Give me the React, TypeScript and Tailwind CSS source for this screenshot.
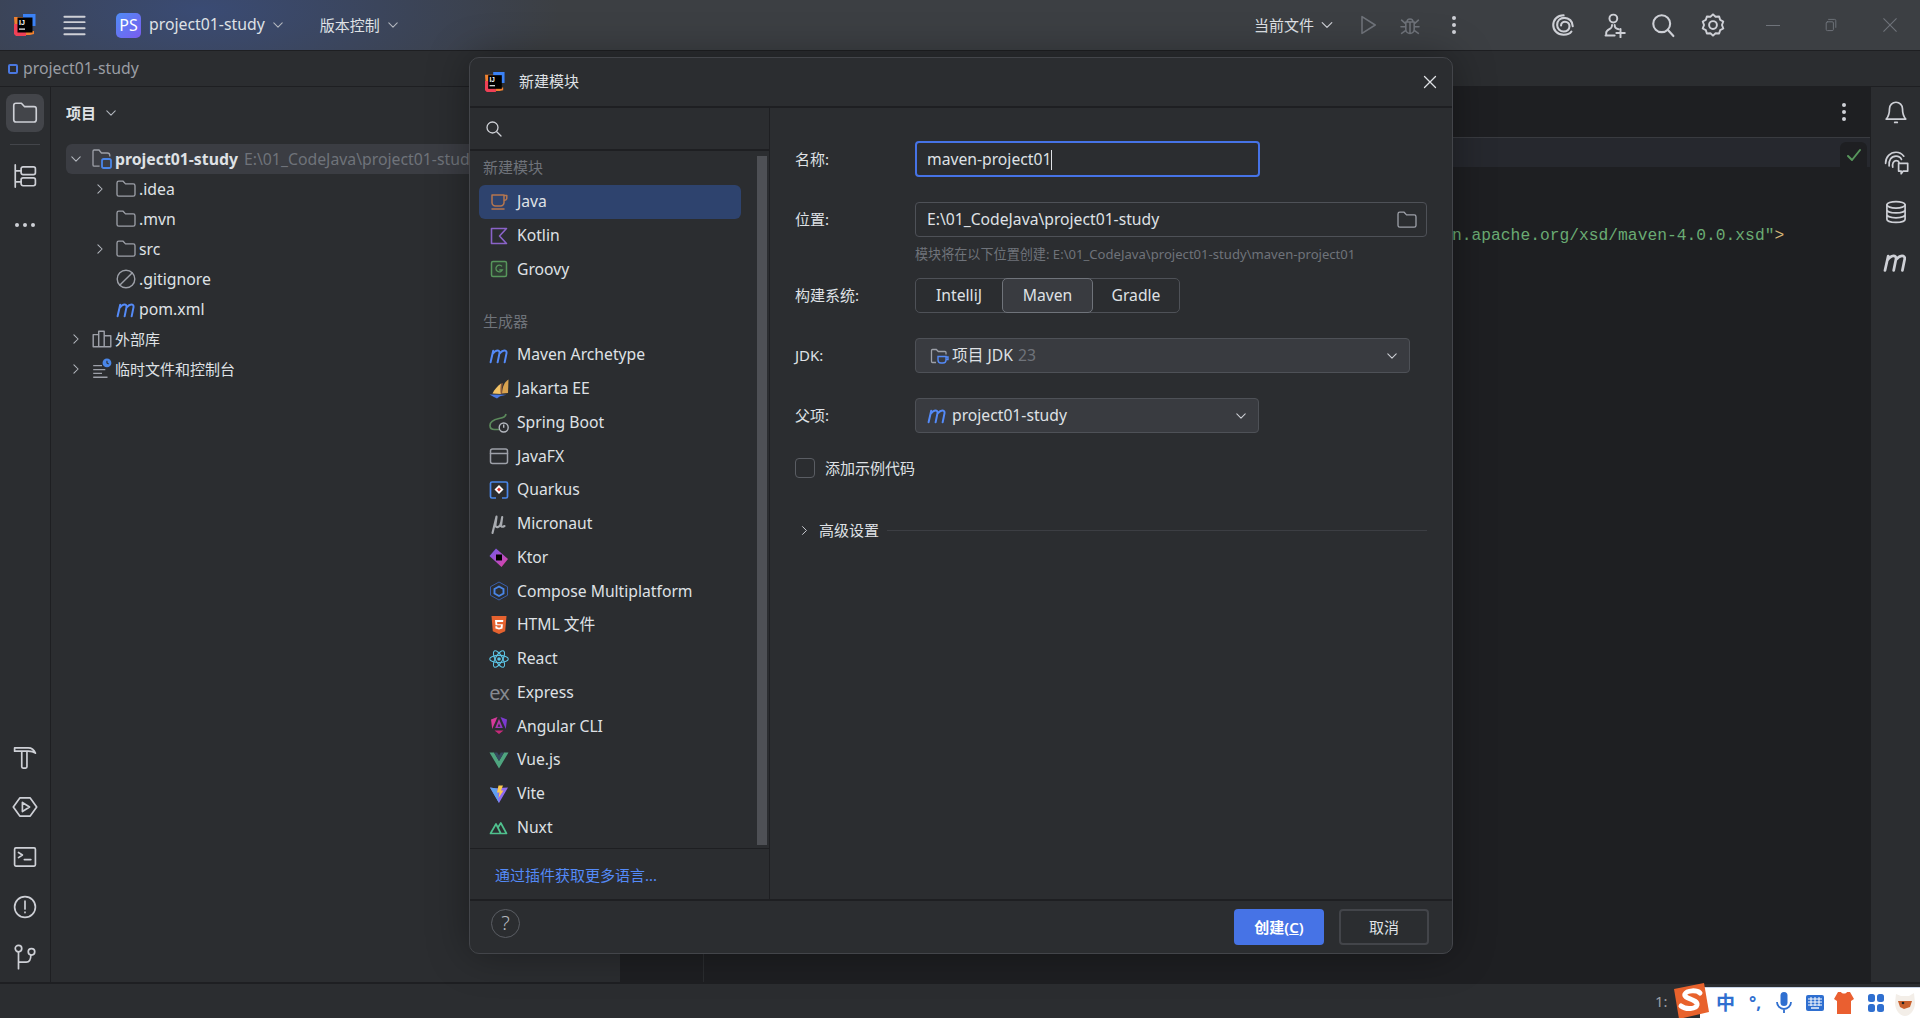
import { ReactNode } from "react";

const stroke = "#ced0d6";

function Ico({ s = 20, children, c = stroke, w = 1.3 }: { s?: number; children: ReactNode; c?: string; w?: number }) {
  return (
    <svg width={s} height={s} viewBox="0 0 20 20" fill="none" stroke={c} strokeWidth={w} strokeLinecap="round" strokeLinejoin="round" className="shrink-0">
      {children}
    </svg>
  );
}

function Chevron({ dir = "down", c = "#b4b8bf", s = 14 }: { dir?: "down" | "right"; c?: string; s?: number }) {
  return (
    <Ico s={s} c={c} w={1.5}>
      {dir === "down" ? <path d="M4 7l6 6 6-6" /> : <path d="M7 4l6 6-6 6" />}
    </Ico>
  );
}

const FolderPath = "M2.5 5a1.5 1.5 0 0 1 1.5-1.5h3.6l2 2.2H16a1.5 1.5 0 0 1 1.5 1.5v7.3a1.5 1.5 0 0 1-1.5 1.5H4a1.5 1.5 0 0 1-1.5-1.5z";

function Folder({ s = 24, c = "#9da0a8" }: { s?: number; c?: string }) {
  return (
    <Ico s={s} c={c} w={1.1}>
      <path d={FolderPath} />
    </Ico>
  );
}

function MavenM({ s = 21, c = "#548af7", w = 1.9 }: { s?: number; c?: string; w?: number }) {
  return (
    <Ico s={s} c={c} w={w}>
      <path d="M1.500 16.500L4 5.500M3.400 8.500C5 6.400 6.600 5.200 8 5.200s2.300 1 2 2.500L8.200 16.500M10.200 8C11.700 6.200 13.300 5.200 14.600 5.200s2.400 1 2.100 2.500L14.900 16.500" />
    </Ico>
  );
}

function IdeaLogo({ s = 22 }: { s?: number }) {
  return (
    <svg width={s} height={s} viewBox="0 0 22 22" className="shrink-0">
      <path d="M0 3h12v4H4v9l-3 2z" fill="#f0812f" />
      <path d="M9 0h12.500v12H17V4H9z" fill="#3b82f6" />
      <path d="M0 10h4v8h8v4H2l-2-2z" fill="#ef4056" />
      <path d="M12 17h8v3l-4 1h-4z" fill="#f0812f" />
      <rect x="3.500" y="3.500" width="15" height="15" fill="#000" />
      <text x="5" y="10.500" fontSize="7" fontWeight="700" fill="#fff" fontFamily="Liberation Sans">IJ</text>
      <rect x="5" y="14.500" width="6" height="1.200" fill="#fff" />
    </svg>
  );
}

const LANG_ICONS: Record<string, ReactNode> = {
  Java: (
    <Ico c="#b5764f" w={1.5}>
      <path d="M3 3h12v7.500a3.500 3.500 0 0 1-3.500 3.500h-5A3.500 3.500 0 0 1 3 10.500zM15 3.600h2.800v2.600a2 2 0 0 1-2.800 1.800M3 17h12" />
    </Ico>
  ),
  Kotlin: (
    <Ico c="#8a63c8" w={1.6}>
      <path d="M2.500 2.500h15l-7 7.500 7 7.500h-15z" />
    </Ico>
  ),
  Groovy: (
    <svg width="20" height="20" viewBox="0 0 20 20" fill="none" className="shrink-0">
      <rect x="2.500" y="2.500" width="15" height="15" rx="1.500" stroke="#57965c" strokeWidth="1.500" fill="#2f3d33" />
      <path d="M13 7.400A3.400 3.400 0 1 0 13.400 11H10.300" stroke="#57965c" strokeWidth="1.300" />
    </svg>
  ),
  "Maven Archetype": <MavenM />,
  "Jakarta EE": (
    <svg width="20" height="20" viewBox="0 0 20 20" className="shrink-0">
      <path d="M19.500 0.500C15.500 3 13.500 7 13 14.500l6-.5z" fill="#d9a24f" />
      <path d="M12 4.500C8.500 7 5.500 10.500 3.500 14.500l8.500.5z" fill="#f2c265" />
      <path d="M12 4.500c-.6 3-.8 6.500-.3 10.500l1.300-.3c-.2-4 .2-7.500 1-10.500z" fill="#8d5a3a" />
      <path d="M0.500 15.500l17 .2-6.500 1.500-3 2.300-3.500-1.800z" fill="#4a78e0" />
    </svg>
  ),
  "Spring Boot": (
    <svg width="20" height="20" viewBox="0 0 20 20" fill="none" className="shrink-0">
      <path d="M17 1c-.5 3-2.500 3.500-7 4.500C5 6.500 1 8.500 1 12.500 1 15 3 16.500 5.500 16.500H10" stroke="#5c8a5c" strokeWidth="1.700" />
      <circle cx="14.700" cy="14.500" r="4.500" stroke="#b4b8bf" strokeWidth="1.400" />
      <path d="M14.700 11.500v3.200" stroke="#b4b8bf" strokeWidth="1.400" />
    </svg>
  ),
  JavaFX: (
    <Ico c="#9da0a8" w={1.5}>
      <rect x="1.500" y="3" width="17" height="14.500" rx="2" />
      <path d="M1.500 7.500h17" />
    </Ico>
  ),
  Quarkus: (
    <svg width="20" height="20" viewBox="0 0 20 20" fill="none" className="shrink-0">
      <path d="M7 18H3a1.500 1.500 0 0 1-1.500-1.500v-13A1.500 1.500 0 0 1 3 2h14a1.500 1.500 0 0 1 1.500 1.500v13A1.500 1.500 0 0 1 17 18h-4" stroke="#4a86e8" strokeWidth="1.700" />
      <path d="M10 5l4.500 4.500-4.500 4.500-4.500-4.500z" fill="#fff" />
      <path d="M10 7.500l2 2-2 2-2-2z" fill="#d0342c" />
    </svg>
  ),
  Micronaut: (
    <Ico c="#a8abb0" w={2.100}>
      <path d="M7.500 2.500L3.500 19M7.500 3l-1 7.500c-.3 2 1 3 2.500 2.500 1.800-.6 2.800-2.200 3.300-5l.9-5M13.200 3l-1.100 8c-.2 1.800 1 2.300 3.400 1" />
    </Ico>
  ),
  Ktor: (
    <svg width="20" height="20" viewBox="0 0 20 20" className="shrink-0">
      <defs>
        <linearGradient id="ktorG" x1="0" y1="0" x2="1" y2="1">
          <stop offset="0" stopColor="#6d5cf0" />
          <stop offset="1" stopColor="#e83fa0" />
        </linearGradient>
      </defs>
      <path d="M7 0.500L19 11l-6.500 8L0.500 8z" fill="url(#ktorG)" />
      <rect x="7" y="6.500" width="6" height="6" fill="#000" />
    </svg>
  ),
  "Compose Multiplatform": (
    <svg width="20" height="20" viewBox="0 0 20 20" fill="none" className="shrink-0">
      <path d="M10 1l8.500 4.700v8.600L10 19l-8.500-4.700V5.700z" stroke="#3a5ea8" strokeWidth="1" />
      <path d="M10 5.500l4.500 2.500v4.500L10 15l-4.500-2.500V8z" stroke="#4a86e8" strokeWidth="1.900" />
    </svg>
  ),
  "HTML 文件": (
    <svg width="20" height="20" viewBox="0 0 20 20" className="shrink-0">
      <path d="M2.500 1h15l-1.300 15.300L10 19l-6.200-2.700z" fill="#e5622f" />
      <path d="M6 5h8.300l-.2 2H8.100l.2 2.200h5.600l-.4 4.300-3.500 1.100-3.500-1.100-.2-2.300h1.900l.1 1 1.700.5 1.700-.5.200-2H6.500z" fill="#fff" />
    </svg>
  ),
  React: (
    <svg width="20" height="20" viewBox="0 0 20 20" fill="none" stroke="#5cc4e4" strokeWidth="1.100" className="shrink-0">
      <ellipse cx="10" cy="10" rx="9.300" ry="3.600" />
      <ellipse cx="10" cy="10" rx="9.300" ry="3.600" transform="rotate(60 10 10)" />
      <ellipse cx="10" cy="10" rx="9.300" ry="3.600" transform="rotate(120 10 10)" />
      <circle cx="10" cy="10" r="1.800" fill="#5cc4e4" stroke="none" />
    </svg>
  ),
  Express: <span className="text-[20px] leading-none text-[#868a91] tracking-[-1px]">ex</span>,
  "Angular CLI": (
    <svg width="20" height="20" viewBox="0 0 20 20" className="shrink-0">
      <defs>
        <linearGradient id="angG" x1="0" y1="0" x2="1" y2="1">
          <stop offset="0" stopColor="#e0338f" />
          <stop offset="1" stopColor="#7c3ad0" />
        </linearGradient>
      </defs>
      <path d="M8.500 1L2 3.500 3.200 13z" fill="#d63a9a" />
      <path d="M11.500 1L18 3.500 16.800 13z" fill="#7c3ad0" />
      <path d="M10 3l3.800 9H6.200z" fill="url(#angG)" />
      <path d="M5.500 14.500h9L10 18z" fill="#c62a7a" />
      <path d="M10 7.500l1.400 3.300H8.600z" fill="#2b2d30" />
    </svg>
  ),
  "Vue.js": (
    <svg width="20" height="20" viewBox="0 0 20 20" className="shrink-0">
      <path d="M0.500 2.500H5L10 11 15 2.500h4.500L10 18.500z" fill="#4fa57f" />
      <path d="M5 2.500h3.200L10 5.500l1.800-3H15L10 11z" fill="#35495e" />
    </svg>
  ),
  Vite: (
    <svg width="20" height="20" viewBox="0 0 20 20" className="shrink-0">
      <path d="M1 3.500l6 .9 3-.5 9-.4L10 19z" fill="#8f6cf0" />
      <path d="M1 3.500l7 1L10 19z" fill="#5fa0ee" />
      <path d="M9.500 1.500h4.500l-2 5h2.500L9.500 14l1-5.500H8z" fill="#fbc94b" />
    </svg>
  ),
  Nuxt: (
    <Ico c="#4fc08d" w={1.700}>
      <path d="M1.500 15.500L7 6l4.800 9.500zM9 9.500L11.800 5l5.700 10.500h-5.700" />
    </Ico>
  ),
};

function LangRow({ name, active }: { name: string; active?: boolean }) {
  return (
    <div className={`flex items-center h-[33.75px] w-[262px] pl-[10px] gap-[8px] rounded-md ${active ? "bg-[#2e436e]" : ""}`}>
      <div className="flex w-[20px] justify-center">{LANG_ICONS[name]}</div>
      <span className="text-[15.700px] text-[#dfe1e5] whitespace-nowrap">{name}</span>
    </div>
  );
}

function TreeRow({ indent, arrow, icon, children, selected }: { indent: number; arrow?: "down" | "right"; icon: ReactNode; children: ReactNode; selected?: boolean }) {
  return (
    <div className={`flex items-center h-[30px] whitespace-nowrap rounded-l-md ${selected ? "bg-[#3b3d43]" : ""}`} style={{ paddingLeft: indent }}>
      <div className="w-[20px] flex justify-center">{arrow && <Chevron dir={arrow} />}</div>
      <div className="w-[24px] ml-[4px] flex justify-center">{icon}</div>
      <div className="ml-[1px] pt-[2px] text-[15.800px] text-[#dfe1e5]">{children}</div>
    </div>
  );
}

function FormRow({ label, className, children }: { label: string; className: string; children: ReactNode }) {
  return (
    <div className={`flex items-center ${className}`}>
      <div className="w-[120px] text-[15px] text-[#dfe1e5]">{label}</div>
      {children}
    </div>
  );
}

const generators = ["Maven Archetype", "Jakarta EE", "Spring Boot", "JavaFX", "Quarkus", "Micronaut", "Ktor", "Compose Multiplatform", "HTML 文件", "React", "Express", "Angular CLI", "Vue.js", "Vite", "Nuxt"];

function Kebab() {
  return (
    <div className="flex flex-col gap-[3px]">
      <span className="w-[4px] h-[4px] rounded-full bg-[#ced0d6]" />
      <span className="w-[4px] h-[4px] rounded-full bg-[#ced0d6]" />
      <span className="w-[4px] h-[4px] rounded-full bg-[#ced0d6]" />
    </div>
  );
}

function NewModuleDialog() {
  return (
    <div className="absolute left-[469px] top-[57px] w-[984px] h-[897px] flex flex-col bg-[#2b2d30] border border-[#43454a] rounded-[10px] shadow-[0_0_40px_rgba(0,0,0,0.35)] overflow-hidden">
      {/* title */}
      <div className="flex items-center h-[50px] shrink-0 pl-[15px] pr-[12px] border-b-2 border-[#1e1f22]">
        <IdeaLogo s={20} />
        <span className="ml-[14px] -mt-[2px] text-[15px] text-[#dfe1e5]">新建模块</span>
        <div className="ml-auto">
          <Ico s={20} c="#dfe1e5" w={1.3}>
            <path d="M4.500 4.500l11 11M15.500 4.500l-11 11" />
          </Ico>
        </div>
      </div>

      <div className="flex flex-1 min-h-0">
        {/* left column */}
        <div className="w-[300px] shrink-0 flex flex-col border-r border-[#1e1f22]">
          <div className="flex items-center h-[43px] shrink-0 pl-[14px] border-b-2 border-[#1e1f22]">
            <Ico s={20} c="#ced0d6">
              <circle cx="8.500" cy="8.500" r="5.500" />
              <path d="M13 13l4 4" />
            </Ico>
          </div>
          <div className="flex flex-1 min-h-0 border-b border-[#1e1f22]">
            <div className="flex-1 pl-[9px]">
              <div className="h-[34px] flex items-center pl-[4px] pb-[2px] text-[15px] text-[#6f737a]">新建模块</div>
              <LangRow name="Java" active />
              <LangRow name="Kotlin" />
              <LangRow name="Groovy" />
              <div className="mt-[18px] h-[34px] flex items-center pl-[4px] text-[15px] text-[#6f737a]">生成器</div>
              {generators.map((g) => (
                <LangRow key={g} name={g} />
              ))}
            </div>
            <div className="w-[10px] mr-[2px] mt-[5px] mb-[3px] bg-[#4e5055]" />
          </div>
          <div className="h-[50px] shrink-0 flex items-center pl-[25px] pt-[3px] text-[15px] text-[#548af7]">通过插件获取更多语言...</div>
        </div>

        {/* right column */}
        <div className="flex-1 flex flex-col pl-[25px] pr-[25px] pt-[33px]">
          <FormRow label="名称:" className="h-[36px]">
            <div className="w-[345px] h-[36px] flex items-center pl-[10px] pt-[1px] rounded-[4px] border-2 border-[#4673e6] text-[15.700px] text-[#dfe1e5]">
              maven-project01<span className="w-px h-[20px] bg-[#dfe1e5]" />
            </div>
          </FormRow>
          <FormRow label="位置:" className="h-[35px] mt-[25px]">
            <div className="flex-1 h-[35px] flex items-center justify-between pl-[11px] pr-[7px] rounded-[4px] border border-[#4e5157] text-[15.700px] text-[#dfe1e5]">
              E:\01_CodeJava\project01-study
              <Folder s={24} c="#9da0a8" />
            </div>
          </FormRow>
          <div className="ml-[120px] mt-[9px] h-[18px] flex items-center text-[13.100px] text-[#6f737a] whitespace-nowrap">模块将在以下位置创建: E:\01_CodeJava\project01-study\maven-project01</div>
          <FormRow label="构建系统:" className="h-[35px] mt-[14px]">
            <div className="flex h-[35px] w-[265px] rounded-[5px] border border-[#4e5157] text-[15.700px] text-[#dfe1e5]">
              <div className="w-[86px] pt-[1px] flex items-center justify-center">IntelliJ</div>
              <div className="w-[91px] -my-px pt-[1px] flex items-center justify-center rounded-[5px] border border-[#6f737a] bg-[#393b40]">Maven</div>
              <div className="flex-1 pt-[1px] flex items-center justify-center">Gradle</div>
            </div>
          </FormRow>
          <FormRow label="JDK:" className="h-[35px] mt-[25px]">
            <div className="w-[495px] h-[35px] flex items-center pl-[13px] pr-[10px] rounded-[4px] border border-[#4e5157] bg-[#393b40] text-[15.700px] text-[#dfe1e5]">
              <svg width="20" height="20" viewBox="0 0 20 20" fill="none" className="shrink-0">
                <path d="M7 16.500H3.500a1 1 0 0 1-1-1v-11a1 1 0 0 1 1-1h3.800l2 2H16a1 1 0 0 1 1 1v2" stroke="#9da0a8" strokeWidth="1.300" />
                <path d="M9 10.500h8v3.500a3 3 0 0 1-3 3h-2a3 3 0 0 1-3-3zM17 11h2v2.500h-2" stroke="#548af7" strokeWidth="1.400" />
              </svg>
              <span className="ml-[3px] pt-[1px]">项目 JDK</span>
              <span className="ml-[5px] pt-[1px] text-[#6f737a]">23</span>
              <div className="ml-auto">
                <Chevron c="#ced0d6" />
              </div>
            </div>
          </FormRow>
          <FormRow label="父项:" className="h-[35px] mt-[25px]">
            <div className="w-[344px] h-[35px] flex items-center pl-[11px] pr-[10px] rounded-[4px] border border-[#4e5157] bg-[#393b40] text-[15.700px] text-[#dfe1e5]">
              <MavenM />
              <span className="ml-[4px] pt-[1px]">project01-study</span>
              <div className="ml-auto">
                <Chevron c="#ced0d6" />
              </div>
            </div>
          </FormRow>
          <div className="flex items-center h-[20px] mt-[25px]">
            <div className="w-[20px] h-[20px] rounded-[4px] border border-[#5a5d63]" />
            <span className="ml-[10px] text-[15px] text-[#dfe1e5]">添加示例代码</span>
          </div>
          <div className="flex items-center h-[20px] mt-[42px]">
            <div className="ml-[1px] w-[16px] flex justify-center">
              <Chevron dir="right" c="#ced0d6" s={13} />
            </div>
            <span className="ml-[7px] text-[15px] text-[#dfe1e5]">高级设置</span>
            <div className="flex-1 h-px ml-[8px] bg-[#3c3e43]" />
          </div>
        </div>
      </div>

      {/* footer */}
      <div className="h-[54px] shrink-0 flex items-center pl-[21px] pr-[23px] border-t-2 border-[#1e1f22]">
        <div className="w-[29px] h-[29px] -mt-[8px] rounded-full border border-[#5a5d63] flex items-center justify-center text-[20px] font-light text-[#b4b8bf]">?</div>
        <div className="ml-auto flex gap-[15px]">
          <div className="w-[90px] h-[36px] flex items-center justify-center rounded-[4px] bg-[#4673e6] text-[15px] text-white font-semibold">
            创建(<span className="underline">C</span>)
          </div>
          <div className="w-[90px] h-[36px] flex items-center justify-center rounded-[4px] border-2 border-[#43454a] text-[15px] text-[#dfe1e5]">取消</div>
        </div>
      </div>
    </div>
  );
}

function ImeBar() {
  return (
    <div className="absolute right-0 bottom-0 w-[220px] h-[31px] flex items-center pl-[16px] bg-white border-t border-[#c8d4e8]">
      <svg width="38" height="38" viewBox="0 0 38 38" className="absolute -left-[28px] -top-[6px]">
        <path d="M2 7L32 1l5 29-30 7z" fill="#e8622c" />
        <path d="M28 11c-3-3-13-3-15 1-2 5 13 5 12 11-1 4-11 5-16 1" fill="none" stroke="#fff" strokeWidth="5" strokeLinecap="round" />
      </svg>
      <span className="w-[18px] text-[19px] leading-none font-bold text-[#2f6fd0]">中</span>
      <span className="ml-[9px] w-[24px] text-center text-[17px] font-bold text-[#2f6fd0]">°,</span>
      <div className="ml-[3px] w-[28px] flex justify-center">
        <svg width="18" height="26" viewBox="0 0 18 24" fill="none">
          <rect x="5.500" y="1" width="7" height="14" rx="3.500" fill="#2f6fd0" />
          <path d="M2 11a7 7 0 0 0 14 0M9 18v4" stroke="#2f6fd0" strokeWidth="1.800" />
        </svg>
      </div>
      <div className="ml-[3px] w-[28px] flex justify-center">
        <svg width="20" height="18" viewBox="0 0 20 18">
          <rect x="1" y="1" width="18" height="16" rx="2" fill="#2f6fd0" />
          <path d="M3 5h14M3 8h14M3 11h14M6 3v9M10 3v9M14 3v9" stroke="#fff" strokeWidth="1" />
          <path d="M6 14h8" stroke="#fff" strokeWidth="1.400" />
        </svg>
      </div>
      <div className="ml-[2px] w-[26px] flex justify-center">
        <svg width="22" height="24" viewBox="0 0 22 24">
          <path d="M5 1h3c1 2 5 2 6 0h3l4 7-3 2v13H4V10L1 8z" fill="#ea5f30" />
        </svg>
      </div>
      <div className="ml-[7px] w-[24px] flex justify-center">
        <svg width="18" height="20" viewBox="0 0 18 20" fill="#2f6fd0">
          <rect x="1" y="1" width="7" height="8" rx="2.500" />
          <rect x="10" y="1" width="7" height="8" rx="2.500" />
          <rect x="1" y="11" width="7" height="8" rx="2.500" />
          <rect x="10" y="11" width="7" height="8" rx="2.500" />
        </svg>
      </div>
      <div className="ml-[2px] w-[30px] flex justify-center">
        <svg width="26" height="30" viewBox="0 0 26 30">
          <path d="M4 6l5 2h8l5-3 1 10c0 7-5 13-10 13S3 22 3 15z" fill="#f3eee8" />
          <path d="M6 13h14l-2 6-6 2-4-2z" fill="#c9602c" />
          <circle cx="11" cy="15" r="1.300" fill="#222" />
        </svg>
      </div>
    </div>
  );
}

export default function App() {
  return (
    <div className="relative w-[1920px] h-[1018px] overflow-hidden flex flex-col bg-[#2b2d30] font-['Noto_Sans','Noto_Sans_CJK_SC',sans-serif]">
      {/* title bar */}
      <header className="h-[51px] shrink-0 flex items-center border-b border-[#1e1f22] bg-[radial-gradient(ellipse_360px_130px_at_200px_10px,#3a4b74,#3c3f43)]">
        <div className="ml-[14px]">
          <IdeaLogo s={22} />
        </div>
        <div className="ml-[25px]">
          <Ico s={27} c="#ced0d6" w={1.400}>
            <path d="M2.500 3.500h15M2.500 7.500h15M2.500 12h15M2.500 16.500h15" />
          </Ico>
        </div>
        <div className="ml-[28px] w-[25px] h-[25px] rounded-[5px] bg-[linear-gradient(135deg,#4f8cf5,#7a5cf0)] flex items-center justify-center text-[16px] text-white">PS</div>
        <span className="ml-[8px] text-[15.800px] text-[#dfe1e5]">project01-study</span>
        <div className="ml-[6px]">
          <Chevron />
        </div>
        <span className="ml-[35px] text-[15px] text-[#dfe1e5]">版本控制</span>
        <div className="ml-[6px]">
          <Chevron />
        </div>
        <span className="ml-auto text-[15px] text-[#dfe1e5]">当前文件</span>
        <div className="ml-[5px]">
          <Chevron c="#ced0d6" s={16} />
        </div>
        <div className="ml-[21px]">
          <Ico s={24} c="#6f737a">
            <path d="M5 3l11 7-11 7z" />
          </Ico>
        </div>
        <div className="ml-[18px]">
          <Ico s={24} c="#6f737a">
            <path d="M6.500 7.500h7v6a3.500 3.500 0 0 1-7 0zM7.500 7.500a2.500 2.500 0 0 1 5 0M10 7.500V17M3 6l3.500 3M17 6l-3.500 3M2.500 11.500h4M17.500 11.500h-4M3 17l3.500-2.500M17 17l-3.500-2.500" />
          </Ico>
        </div>
        <div className="ml-[30px]">
          <Kebab />
        </div>
        <div className="ml-[94px]">
          <Ico s={26} w={1.600}>
            <path d="M10.500 2.500C5.500 2.500 2.500 6 2.500 10c0 4 3 7.500 8 7.500 3 0 5-1 6-2.500M17.500 11c0-4-3-6.500-6.500-6.500C8 4.500 5.500 6.500 5.500 10c0 3 2.500 5 5 5 2.500 0 4.500-1.500 4.500-4 0-2-1.500-3.500-3.500-3.500-1.500 0-3 1-3 2.800" />
          </Ico>
        </div>
        <div className="ml-[25px]">
          <Ico s={26} w={1.500}>
            <circle cx="9.500" cy="5" r="3" />
            <path d="M4 18v-2c0-2 2-2.500 3.500-3.500.8-.6 1-1.500 1-2.500M10.500 10c0 2 1.500 3 3 3.200M3.500 18h7M15 13v6.500M11.800 16.200h6.500" />
          </Ico>
        </div>
        <div className="ml-[23px]">
          <Ico s={26} w={1.600}>
            <circle cx="9" cy="9" r="6.500" />
            <path d="M13.800 13.800L18 18.500" />
          </Ico>
        </div>
        <div className="ml-[24px]">
          <Ico s={26} w={1.500}>
            <path d="M10 1.800l2 1.900 2.700-.3.800 2.600 2.400 1.300-1 2.700 1 2.700-2.400 1.300-.8 2.600-2.700-.3-2 1.900-2-1.900-2.700.3-.8-2.600L2.100 12.700l1-2.700-1-2.700 2.400-1.300.8-2.600 2.700.3z" />
            <circle cx="10" cy="10" r="3" />
          </Ico>
        </div>
        <div className="ml-[40px] w-[14px] h-px bg-[#6f737a]" />
        <div className="ml-[43px]">
          <Ico s={16} c="#6f737a" w={1.200}>
            <rect x="4" y="6" width="9" height="11" rx="1.500" />
            <path d="M7 3h7.500A1.500 1.500 0 0 1 16 4.500V13" />
          </Ico>
        </div>
        <div className="ml-[42px] mr-[21px]">
          <Ico s={18} c="#6f737a" w={1.200}>
            <path d="M3 3l14 14M17 3L3 17" />
          </Ico>
        </div>
      </header>

      {/* breadcrumb */}
      <div className="h-[36px] shrink-0 flex items-center pl-[8px] border-b border-[#1e1f22]">
        <div className="w-[10px] h-[10px] rounded-[2px] border-2 border-[#4a78e0]" />
        <span className="ml-[5px] text-[15.800px] text-[#9a9da4]">project01-study</span>
      </div>

      <div className="flex flex-1 min-h-0">
        {/* left tool strip */}
        <aside className="w-[51px] shrink-0 flex flex-col items-center border-r border-[#1e1f22] pt-[7px] pb-[12px]">
          <div className="w-[38px] h-[38px] rounded-lg bg-[#43454a] flex items-center justify-center">
            <Ico s={30} w={1.100}>
              <path d={FolderPath} />
            </Ico>
          </div>
          <div className="mt-[12px] w-[30px] h-px bg-[#43454a]" />
          <div className="mt-[18px]">
            <Ico s={26}>
              <path d="M2.500 1.500v17M2.500 6H7M2.500 14.500H7" />
              <rect x="7" y="3" width="11" height="6" rx="1.500" />
              <rect x="7" y="11.500" width="11" height="6" rx="1.500" />
            </Ico>
          </div>
          <div className="mt-[34px] flex gap-[4px]">
            <span className="w-[4px] h-[4px] rounded-full bg-[#ced0d6]" />
            <span className="w-[4px] h-[4px] rounded-full bg-[#ced0d6]" />
            <span className="w-[4px] h-[4px] rounded-full bg-[#ced0d6]" />
          </div>
          <div className="mt-auto flex flex-col gap-[24px]">
            <Ico s={26}>
              <path d="M2 3h10.500c2.500 0 4.500 1.500 5.500 4-2-1.500-3.500-1.500-5.500-1.500H2zM7.500 5.500h4v12a1 1 0 0 1-1 1h-2a1 1 0 0 1-1-1z" />
            </Ico>
            <Ico s={26}>
              <path d="M6 3h8l5 7-5 7H6L1 10z" />
              <path d="M8 6.500l5.500 3.500L8 13.500z" />
            </Ico>
            <Ico s={26}>
              <rect x="2" y="3" width="16" height="14" rx="1" />
              <path d="M5 6.500l3 2-3 2M9.500 12h5" />
            </Ico>
            <Ico s={26}>
              <circle cx="10" cy="10" r="8" />
              <path d="M10 5.500v6M10 14v.3" />
            </Ico>
            <Ico s={26}>
              <circle cx="5" cy="3.500" r="2.500" />
              <circle cx="15" cy="6" r="2.500" />
              <path d="M5 6v13M5 14h6c2 0 3.500-2 3.500-5.500" />
            </Ico>
          </div>
        </aside>

        {/* project panel */}
        <section className="w-[569px] shrink-0 flex flex-col">
          <div className="h-[52px] shrink-0 flex items-center pl-[15px]">
            <span className="text-[15px] font-semibold text-[#dfe1e5]">项目</span>
            <div className="ml-[8px]">
              <Chevron />
            </div>
          </div>
          <div className="ml-[15px] pt-[5px]">
            <TreeRow indent={0} arrow="down" selected icon={
              <svg width="24" height="24" viewBox="0 0 20 20" fill="none">
                <path d="M8 16H3.500a1 1 0 0 1-1-1V3.500a1 1 0 0 1 1-1h4l2 2.500h5a2 2 0 0 1 2 2v1" stroke="#9da0a8" strokeWidth="1.100" />
                <rect x="10" y="10" width="7.500" height="7.500" rx="1.500" stroke="#4a86e8" strokeWidth="1.500" />
              </svg>
            }>
              <span className="font-bold">project01-study</span>
              <span className="ml-[6px] text-[#6f737a]">E:\01_CodeJava\project01-study</span>
            </TreeRow>
            <TreeRow indent={24} arrow="right" icon={<Folder />}>.idea</TreeRow>
            <TreeRow indent={24} icon={<Folder />}>.mvn</TreeRow>
            <TreeRow indent={24} arrow="right" icon={<Folder />}>src</TreeRow>
            <TreeRow indent={24} icon={
              <Ico c="#9da0a8" s={22}>
                <circle cx="10" cy="10" r="8" />
                <path d="M4.500 15.500l11-11" />
              </Ico>
            }>.gitignore</TreeRow>
            <TreeRow indent={24} icon={<MavenM />}>pom.xml</TreeRow>
            <TreeRow indent={0} arrow="right" icon={
              <Ico c="#9da0a8" s={22}>
                <path d="M2 6h5v11H2zM7 3h5v14H7zM12 7h6v10h-6z" />
              </Ico>
            }>
              <span className="text-[15px]">外部库</span>
            </TreeRow>
            <TreeRow indent={0} arrow="right" icon={
              <svg width="22" height="22" viewBox="0 0 20 20" fill="none">
                <path d="M2 7h8M2 10.500h11M2 14h8M2 17.500h13" stroke="#9da0a8" strokeWidth="1.200" />
                <circle cx="14.500" cy="4.500" r="4" fill="#4a86e8" />
                <path d="M14.500 2.500v2l1.500 1" stroke="#2b2d30" strokeWidth="1" />
              </svg>
            }>
              <span className="text-[15px]">临时文件和控制台</span>
            </TreeRow>
          </div>
        </section>

        {/* editor */}
        <main className="flex-1 min-w-0 flex flex-col bg-[#1e1f22]">
          <div className="h-[51px] shrink-0 flex items-center justify-end pr-[24px] border-b border-[#393b40]">
            <Kebab />
          </div>
          <div className="h-[29px] shrink-0 flex justify-end pr-[3px] bg-[#26282e]">
            <div className="w-[27px] h-[25px] mt-[4px] flex items-center justify-center bg-[#1e1f22] rounded-t-md">
              <Ico s={20} c="#57965c" w={2}>
                <path d="M4 11l4 4 8-10" />
              </Ico>
            </div>
          </div>
          <div className="flex-1 min-h-0 ml-[83px] border-l border-[#2b2d30]">
            <div className="pl-[748px] pt-[58px] font-['Liberation_Mono',monospace] text-[16.300px] leading-[22px] text-[#6aab73] whitespace-nowrap">
              n.apache.org/xsd/maven-4.0.0.xsd&quot;<span className="text-[#d5b778]">&gt;</span>
            </div>
          </div>
        </main>

        {/* right tool strip */}
        <aside className="w-[50px] shrink-0 flex flex-col items-center pt-[12px] gap-[24px] border-l border-[#1e1f22]">
          <Ico s={26}>
            <path d="M10 2.500a5 5 0 0 1 5 5c0 4 .8 6 2.500 8h-15c1.700-2 2.500-4 2.500-8a5 5 0 0 1 5-5zM9 18h2" />
          </Ico>
          <Ico s={26}>
            <path d="M2 11c0-5 3.500-8.500 8-8.500 2.500 0 4.500 1 6 3M4.700 13c-.5-4 1.500-7.500 5.300-7.500 2 0 3.500 1 4.200 2.500M7.500 14c-.5-2.500.5-5 2.500-5 1 0 2 .5 2.300 1.300M12 11h7v6h-3.500L14 19v-2h-2z" />
          </Ico>
          <Ico s={26}>
            <ellipse cx="10" cy="4.500" rx="7" ry="2.500" />
            <path d="M3 4.500v11c0 1.400 3.100 2.500 7 2.500s7-1.100 7-2.500v-11M3 8.200c0 1.400 3.100 2.500 7 2.500s7-1.100 7-2.500M3 12c0 1.400 3.100 2.500 7 2.500s7-1.100 7-2.500" />
          </Ico>
          <MavenM s={26} c="#ced0d6" w={2.100} />
        </aside>
      </div>

      {/* status bar */}
      <footer className="h-[36px] shrink-0 flex items-center pl-[1655px] border-t-2 border-[#1e1f22] text-[15px] text-[#9a9da4]">1:</footer>

      <NewModuleDialog />
      <ImeBar />
    </div>
  );
}
